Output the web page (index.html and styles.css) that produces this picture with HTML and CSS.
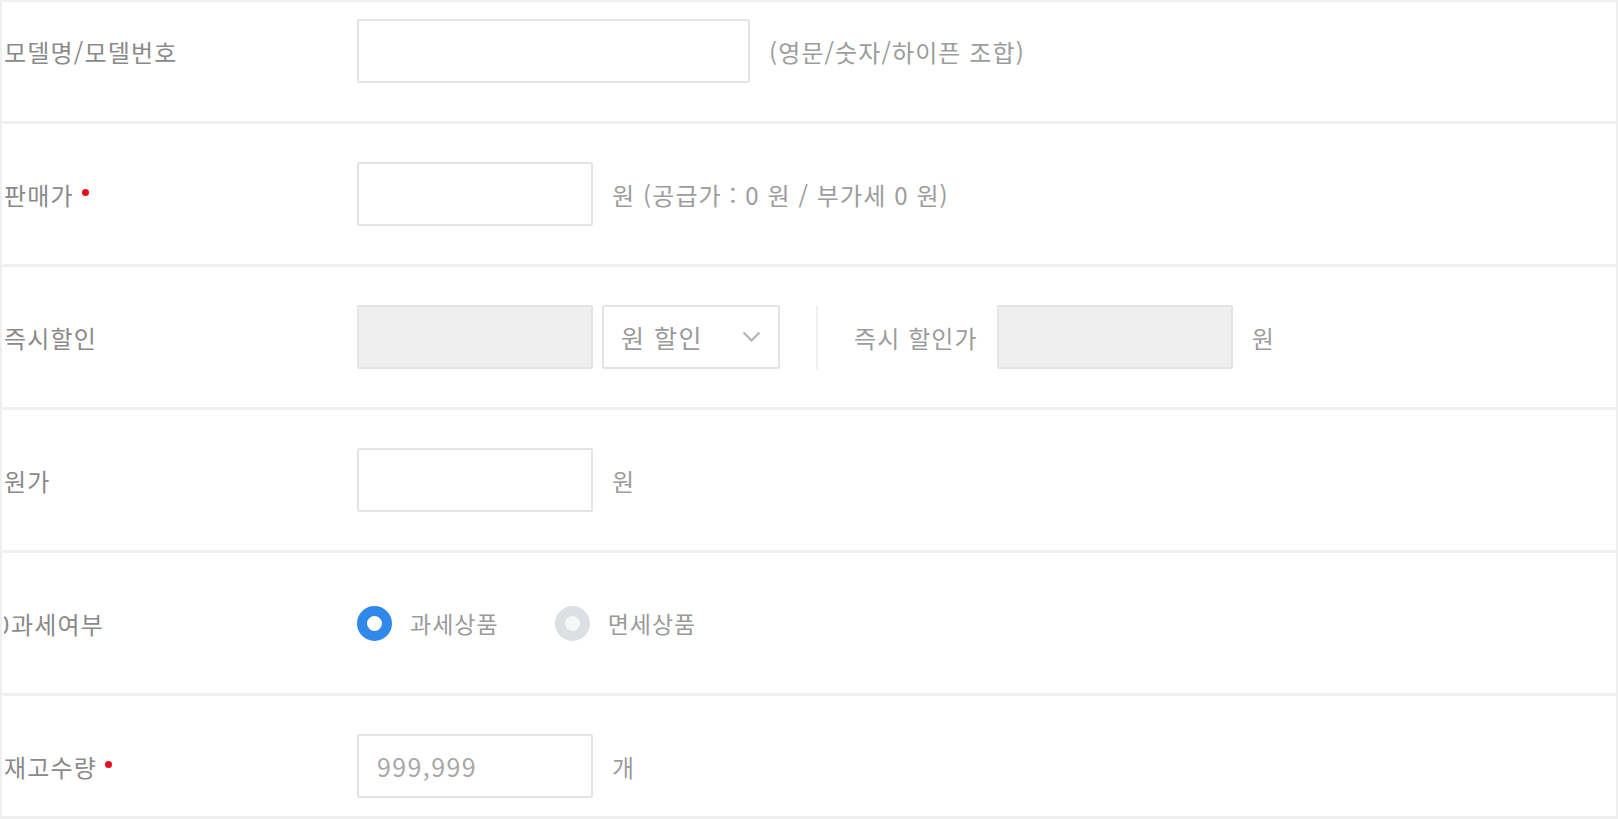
FILE: index.html
```html
<!DOCTYPE html>
<html lang="ko">
<head>
<meta charset="utf-8">
<title>상품 정보</title>
<link rel="stylesheet" href="styles.css">
</head>
<body>
<div class="frame">
  <div class="list">
    <div class="row">
      <div class="label">모델명/모델번호</div>
      <div class="field">
        <input class="box box-wide" type="text">
        <span class="hint">(영문/숫자/하이픈 조합)</span>
      </div>
    </div>
    <div class="row">
      <div class="label">판매가<span class="req"></span></div>
      <div class="field">
        <input class="box" type="text">
        <span class="hint">원 (공급가 : 0 원 / 부가세 0 원)</span>
      </div>
    </div>
    <div class="row">
      <div class="label">즉시할인</div>
      <div class="field field-discount">
        <input class="box box-disabled" type="text" disabled>
        <div class="select">
          <span class="select-text">원 할인</span>
          <svg class="chev" width="19" height="12" viewBox="0 0 19 12"><path d="M1.5 1.5 L9.5 9.5 L17.5 1.5" fill="none" stroke="#b4b4b4" stroke-width="2.2"/></svg>
        </div>
        <span class="vline"></span>
        <span class="hint">즉시 할인가</span>
        <input class="box box-disabled" type="text" disabled>
        <span class="hint">원</span>
      </div>
    </div>
    <div class="row">
      <div class="label">원가</div>
      <div class="field">
        <input class="box" type="text">
        <span class="hint">원</span>
      </div>
    </div>
    <div class="row">
      <div class="label"><span class="clip"><span>0</span></span>과세여부</div>
      <div class="field radios">
        <label class="radio"><span class="dot dot-on"></span><span class="rtext">과세상품</span></label>
        <label class="radio"><span class="dot dot-off"></span><span class="rtext">면세상품</span></label>
      </div>
    </div>
    <div class="row">
      <div class="label">재고수량<span class="req"></span></div>
      <div class="field">
        <input class="box box-num" type="text" placeholder="999,999">
        <span class="hint">개</span>
      </div>
    </div>
  </div>
</div>
</body>
</html>
```
FILE: styles.css
```css
html, body {
  margin: 0;
  padding: 0;
  background: #ffffff;
  overflow: hidden;
}

body {
  font-family: "Noto Sans CJK KR", "Noto Sans", sans-serif;
  color: #8c8c8c;
}

.frame {
  height: 819px;
  box-sizing: border-box;
  border: 2px solid #efefef;
  border-bottom-width: 3px;
  background: #f0f0f0;
  overflow: hidden;
}

.list {
  margin-top: -21px;
  display: flex;
  flex-direction: column;
  gap: 3px;
}

.row {
  flex: 0 0 140px;
  height: 140px;
  background: #ffffff;
  display: flex;
  align-items: center;
}

.label {
  width: 355px;
  box-sizing: border-box;
  padding-left: 2px;
  font-size: 24px;
  letter-spacing: 1.2px;
  color: #8a8a8a;
  display: flex;
  align-items: center;
  white-space: nowrap;
}

.req {
  display: inline-block;
  width: 7px;
  height: 7px;
  border-radius: 50%;
  background: #e60f1e;
  margin-left: 8px;
  margin-top: -3px;
}

.clip {
  display: inline-block;
  width: 6px;
  overflow: hidden;
  margin-right: 1px;
  letter-spacing: 0;
}

.clip span {
  display: inline-block;
  margin-left: -8px;
}

.field {
  display: flex;
  align-items: center;
  gap: 19px;
}

.box {
  width: 236px;
  height: 64px;
  box-sizing: border-box;
  border: 2px solid #e4e4e4;
  border-radius: 2px;
  background: #ffffff;
  padding: 0 18px;
  font-family: inherit;
  font-size: 24px;
  color: #666;
  outline: none;
  margin: 0;
}

.box::placeholder {
  color: #a8a8a8;
}

.box-num {
  font-size: 25px;
  letter-spacing: 1.4px;
  padding-left: 18px;
}

.box-wide {
  width: 393px;
}

.box-disabled {
  background: #efefef;
}

.hint {
  font-size: 24px;
  letter-spacing: 1.1px;
  color: #9c9c9c;
  white-space: nowrap;
}

.field-discount {
  gap: 0;
}

.field-discount .select {
  margin-left: 9px;
}

.select {
  width: 178px;
  height: 64px;
  box-sizing: border-box;
  border: 2px solid #e4e4e4;
  border-radius: 2px;
  display: flex;
  align-items: center;
  justify-content: space-between;
  padding: 0 17px 0 17px;
  color: #9a9a9a;
}

.select-text {
  font-size: 25px;
  letter-spacing: 1.5px;
}

.chev {
  display: block;
}

.vline {
  width: 2px;
  height: 63px;
  background: #efefef;
  margin: 0 36px 0 36px;
}

.field-discount .hint + .box-disabled {
  margin-left: 19px;
}

.field-discount .box-disabled + .hint {
  margin-left: 19px;
}

.radios {
  gap: 56px;
}

.radio {
  display: flex;
  align-items: center;
  gap: 18px;
}

.dot {
  width: 35px;
  height: 35px;
  box-sizing: border-box;
  border-radius: 50%;
  border: 10px solid #2f88ea;
  background: #ffffff;
}

.dot-off {
  border-color: #dcdfe3;
  background: #f7f7f8;
}

.rtext {
  font-size: 23px;
  letter-spacing: 1px;
  color: #9a9a9a;
}
```
